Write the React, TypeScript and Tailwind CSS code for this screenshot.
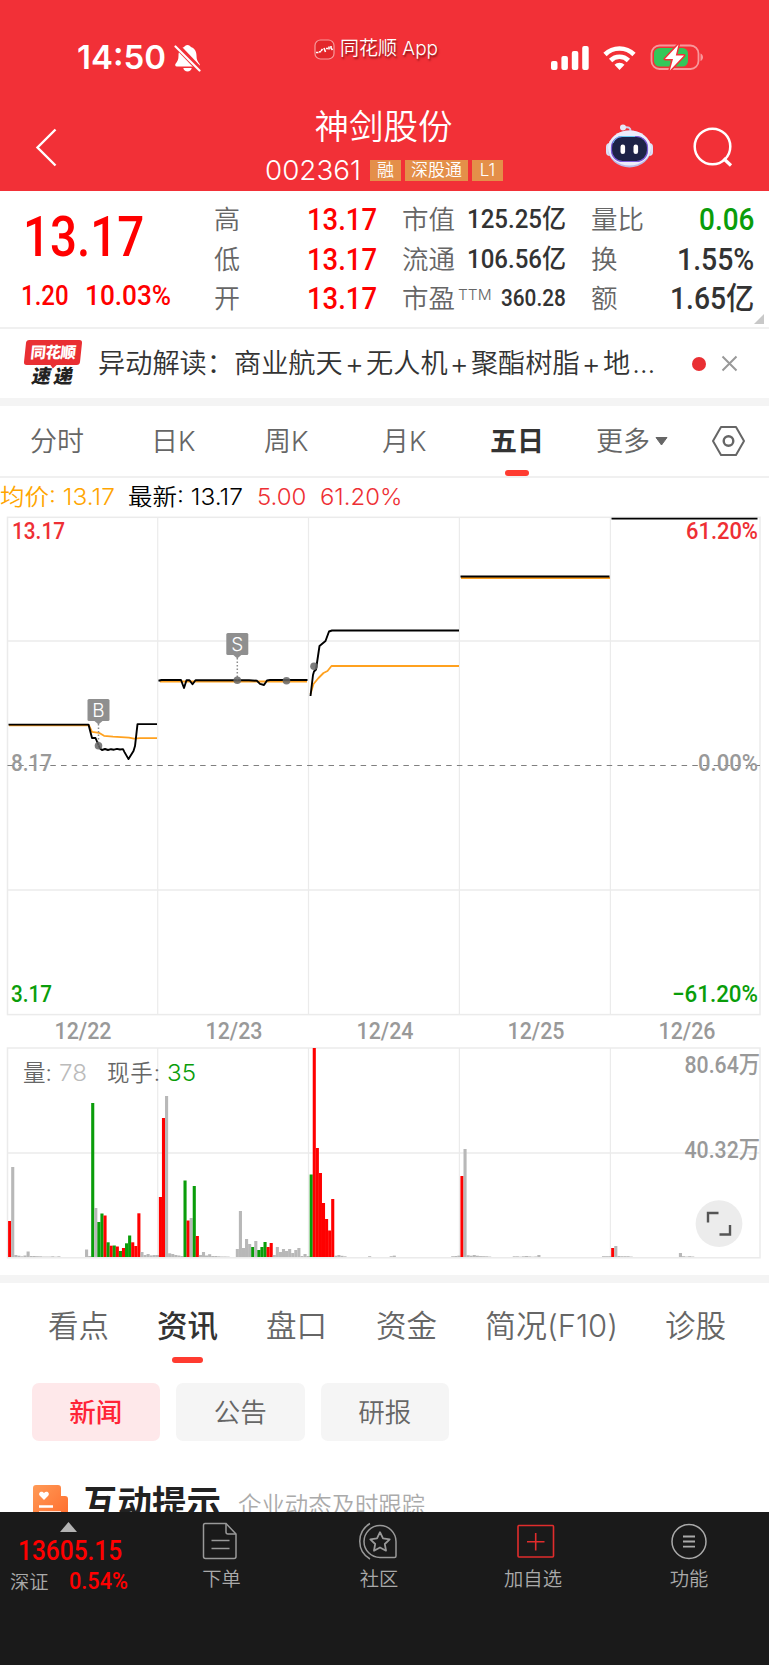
import { useLayoutEffect, useRef } from "react";
import type { ReactNode } from "react";
import clsx from "clsx";

const RED = "#ff0000";
const GREEN = "#0a9d0a";
const GRAY = "#b8b8b8";

type FitProps = { w: number; className?: string; children: ReactNode };

// Squeezes a figure horizontally to the given width
function Fit({ w, className, children }: FitProps) {
  const ref = useRef<HTMLSpanElement>(null);

  useLayoutEffect(() => {
    const el = ref.current;
    if (!el) return;
    el.style.transform = `scaleX(${w / el.offsetWidth})`;
  }, [w, children]);

  return (
    <span className={clsx("block shrink-0 whitespace-nowrap", className)} style={{ width: w }}>
      <span ref={ref} className="inline-block origin-left">
        {children}
      </span>
    </span>
  );
}

const DIN = "font-['Roboto','Noto_Sans_CJK_SC',sans-serif] font-medium";

function StatusBar() {
  return (
    <div className="flex h-[100px] items-start text-white">
      <div className="flex items-center pt-[41px] pl-[77px]">
        <Fit w={89} className="text-[33px] leading-[33px] font-semibold">14:50</Fit>
        <svg className="ml-[8px]" width="27" height="30" viewBox="0 0 27 30">
          <path d="M13.500 2c1.800 0 2.900 1 3.300 2 4 1.400 5.700 4.600 5.700 8.500 0 4 1 6 2.900 8.200.8 1 .4 2.800-1.200 2.800H2.800C1.200 23.500.8 21.700 1.600 20.700 3.500 18.500 4.500 16.500 4.500 12.500c0-3.900 1.700-7.100 5.700-8.500.4-1 1.500-2 3.300-2z" fill="#fff" />
          <path d="M9.300 25h8.400c-.4 2-2 3.500-4.200 3.500S9.700 27 9.300 25z" fill="#fff" />
          <path d="M1.500 1.500l25 26" stroke="#f23037" strokeWidth="6" />
          <path d="M1.500 3.500l24 24" stroke="#fff" strokeWidth="2.200" strokeLinecap="round" />
        </svg>
      </div>
      <div className="flex items-center pt-[38px] pl-[113px]">
        <svg width="21" height="21" viewBox="0 0 21 21">
          <rect x="1" y="1" width="19" height="19" rx="5.500" fill="#e3262b" stroke="#f79a9c" strokeWidth="1.200" />
          <path d="M2 13.500h2.500M5 13l2-.5M7 12l1.500-2M10 9l1.500 4M12 9.500h2M15 7.500v3M17 7v2l1.500 2" stroke="#fff" strokeWidth="1.600" fill="none" />
        </svg>
        <Fit w={98} className="ml-[5px] text-[19px] leading-[22px] [text-shadow:1px_2px_2px_rgba(60,0,0,0.6)]">
          同花顺 App
        </Fit>
      </div>
      <div className="ml-auto flex items-center pt-[43px] pr-[64px]">
        <svg width="38" height="26" viewBox="0 0 38 26" fill="#fff">
          <rect x="0" y="17" width="6.500" height="9" rx="2" />
          <rect x="10.400" y="12" width="6.500" height="14" rx="2" />
          <rect x="20.800" y="7" width="6.500" height="19" rx="2" />
          <rect x="31.200" y="2" width="6.500" height="24" rx="2" />
        </svg>
        <svg className="ml-[14px]" width="33" height="26" viewBox="0 0 33 26" fill="none" stroke="#fff" strokeWidth="4.600">
          <path d="M2 10.500a20.500 20.500 0 0 1 29 0" />
          <path d="M7.600 16.500a12.600 12.600 0 0 1 17.800 0" />
          <path d="M16.500 26l-5-5.200a7 7 0 0 1 10 0z" fill="#fff" stroke="none" />
        </svg>
        <svg className="ml-[14px]" width="55" height="28" viewBox="0 0 55 28">
          <rect x="1.500" y="2.500" width="47" height="23.500" rx="8" fill="none" stroke="#f9979b" strokeWidth="1.800" />
          <path d="M50.500 10.500v7.500c1.500-.5 2.500-2 2.500-3.750s-1-3.250-2.500-3.750z" fill="#f9979b" />
          <rect x="4" y="5" width="34" height="18.500" rx="5.500" fill="#34c759" />
          <path d="M28.500 1.500L15 16h8l-3.200 11.500L34 12.500h-8.200z" fill="#fff" stroke="#f23037" strokeWidth="3" paintOrder="stroke" strokeLinejoin="round" />
        </svg>
      </div>
    </div>
  );
}

function TitleBar() {
  return (
    <div className="grid h-[91px] grid-cols-[200px_1fr_200px]">
      <svg className="mt-[28px] ml-[35px]" width="24" height="40" viewBox="0 0 24 40">
        <path d="M20.500 1.500L2.500 19.500l18 18" fill="none" stroke="#fff" strokeWidth="2.400" />
      </svg>
      <div className="flex flex-col items-center">
        <h1 className="mt-[9px] mr-[2px] text-[34.500px] leading-[36px] text-white">神剑股份</h1>
        <div className="mt-[11px] mr-[1px] flex h-[28px] items-center">
          <Fit w={96} className="mr-[9px] text-[27.500px] leading-[28px] text-white">002361</Fit>
          <div className="flex gap-[4px] text-[17px] leading-[21px] text-white">
            <span className="flex h-[21px] w-[31px] justify-center bg-[#e48f49]">融</span>
            <span className="flex h-[21px] w-[63px] justify-center bg-[#e48f49]">深股通</span>
            <span className="flex h-[21px] w-[31px] justify-center bg-[#e48f49]">L1</span>
          </div>
        </div>
      </div>
      <div className="flex items-start">
        <svg className="mt-[23px] ml-[36px]" width="49" height="46" viewBox="0 0 49 46">
          <path d="M18.500 4.500c5-1 7 0 7.200 4" fill="none" stroke="#cfd2ee" strokeWidth="2" />
          <circle cx="18" cy="4.500" r="3" fill="#e6e8f8" />
          <rect x="1" y="20" width="9" height="13" rx="4" fill="#dcdff5" />
          <rect x="39" y="20" width="9" height="13" rx="4" fill="#dcdff5" />
          <ellipse cx="24.500" cy="26" rx="21.500" ry="18.500" fill="#b9bdea" />
          <ellipse cx="24.500" cy="25" rx="21.500" ry="17.500" fill="#ecedfb" />
          <rect x="6.500" y="13.500" width="36" height="25" rx="11" fill="#1d2347" stroke="#7a5bd8" strokeWidth="1.200" />
          <path d="M8 20c2-5 5-6.500 10-6.500h12" fill="none" stroke="#69c8f2" strokeWidth="1" />
          <rect x="15.500" y="21.500" width="4.600" height="9.500" rx="2.300" fill="#fff" />
          <rect x="28.500" y="21.500" width="4.600" height="9.500" rx="2.300" fill="#fff" />
        </svg>
        <svg className="mt-[26px] ml-[38px]" width="42" height="42" viewBox="0 0 42 42" fill="none" stroke="#fff" strokeWidth="2.500">
          <circle cx="20.500" cy="20.500" r="17.800" />
          <path d="M31.500 32.500l7.500 7" strokeWidth="3.200" />
        </svg>
      </div>
    </div>
  );
}

function QuotePanel() {
  return (
    <section className="relative flex h-[138px] border-b-2 border-[#f0f0f0] text-[#666]">
      <div className={clsx("w-[214px] text-[#ff0000]", DIN)}>
        <Fit w={121} className="mt-[22px] ml-[23px] text-[55px] leading-[48px]">13.17</Fit>
        <div className="mt-[21px] flex pl-[21px] text-[28px] leading-[28px]">
          <Fit w={48}>1.20</Fit>
          <Fit w={86} className="ml-[16px]">10.03%</Fit>
        </div>
      </div>
      <div className="mt-[9px] flex w-[163px] flex-col text-[26px] leading-[39.500px]">
        {["高", "低", "开"].map((label) => (
          <div key={label} className="flex h-[39.500px] items-center justify-between">
            {label}
            <Fit w={70} className={clsx("text-[31px] text-[#ff0000]", DIN)}>13.17</Fit>
          </div>
        ))}
      </div>
      <div className="mt-[9px] ml-[25px] flex w-[164px] flex-col text-[26.500px] leading-[39.500px]">
        <div className="flex h-[39.500px] items-center justify-between">
          市值<Fit w={99} className={clsx("text-[26px] text-[#333]", DIN)}>125.25亿</Fit>
        </div>
        <div className="flex h-[39.500px] items-center justify-between">
          流通<Fit w={99} className={clsx("text-[26px] text-[#333]", DIN)}>106.56亿</Fit>
        </div>
        <div className="flex h-[39.500px] items-center">
          市盈
          <Fit w={34} className="mt-[-8px] ml-[3px] text-[15px]">TTM</Fit>
          <Fit w={65} className={clsx("ml-auto text-[23px] text-[#333]", DIN)}>360.28</Fit>
        </div>
      </div>
      <div className="mt-[9px] ml-[25px] flex w-[163px] flex-col text-[26.500px] leading-[39.500px]">
        <div className="flex h-[39.500px] items-center justify-between">
          量比<Fit w={55} className={clsx("text-[31px] text-[#0a9d0a]", DIN)}>0.06</Fit>
        </div>
        <div className="flex h-[39.500px] items-center justify-between">
          换<Fit w={77} className={clsx("text-[31px] text-[#333]", DIN)}>1.55%</Fit>
        </div>
        <div className="flex h-[39.500px] items-center justify-between">
          额<Fit w={84} className={clsx("text-[31px] text-[#333]", DIN)}>1.65亿</Fit>
        </div>
      </div>
      <svg className="absolute right-[5px] bottom-[3px]" width="10" height="10" viewBox="0 0 10 10">
        <path d="M10 0v10H0z" fill="#c8c8c8" />
      </svg>
    </section>
  );
}

const headline = ["商业航天", "无人机", "聚酯树脂", "地"];

function NewsBar() {
  return (
    <section className="flex h-[69px] items-center">
      <div className="ml-[24px] flex w-[58px] flex-col items-center">
        <div className="relative flex h-[25px] w-[56px] -skew-x-6 items-center justify-center rounded-[3px] bg-[#e92f33] text-[15.500px] leading-[20px] font-black tracking-[-0.5px] text-white">
          同花顺
          <svg className="absolute top-[24px] left-[26px]" width="8" height="5" viewBox="0 0 8 5">
            <path d="M0 0h8L3.500 4.500z" fill="#e92f33" />
          </svg>
        </div>
        <div className="mt-[2px] -skew-x-12 text-[19px] leading-[20px] font-black text-[#222]">
          速<span className="ml-[3px]">递</span>
        </div>
      </div>
      <div className="ml-[16px] flex text-[27.200px] leading-[36px] whitespace-nowrap text-[#333]">
        异动解读：
        {headline.map((word, i) => (
          <span key={word} className="flex">
            {i > 0 && <span className="flex w-[23.300px] justify-center text-[29px]">+</span>}
            {word}
          </span>
        ))}
        <span className="ml-[2px]">…</span>
      </div>
      <i className="ml-auto size-[14px] rounded-full bg-[#e92f33]" />
      <svg className="mr-[31px] ml-[15px]" width="17" height="17" viewBox="0 0 17 17">
        <path d="M1.500 1.500l14 14M15.500 1.500l-14 14" stroke="#999" strokeWidth="2" />
      </svg>
    </section>
  );
}

function PeriodTabs() {
  return (
    <nav className="flex h-[72px] border-b-2 border-[#f0f0f0] text-[27px] leading-[72px] whitespace-nowrap text-[#666]">
      <span className="ml-[30px] w-[121px]">分时</span>
      <span className="w-[113px]">日K</span>
      <span className="w-[118px]">周K</span>
      <span className="w-[108px]">月K</span>
      <span className="flex w-[54px] flex-col items-center font-bold text-[#333]">
        <span className="h-[64px]">五日</span>
        <i className="h-[6px] w-[24px] rounded-full bg-[#ff3b30]" />
      </span>
      <span className="ml-[52px]">更多</span>
      <svg className="mt-[31px] ml-[5px]" width="13" height="9" viewBox="0 0 13 9">
        <path d="M1 .5h11L6.500 8z" fill="#666" stroke="#666" strokeLinejoin="round" />
      </svg>
      <svg className="mt-[19px] ml-[43px]" width="35" height="32" viewBox="0 0 35 32" fill="none" stroke="#666" strokeWidth="2">
        <path d="M10 2h15l8 14-8 14H10L2 16z" strokeLinejoin="round" />
        <circle cx="17.500" cy="16" r="4.800" strokeWidth="2.400" />
      </svg>
    </nav>
  );
}

type AxisTextProps = { x: number; y: number; w: number; fill: string; children: ReactNode };

function AxisText({ x, y, w, fill, children }: AxisTextProps) {
  return (
    <text
      x={x}
      y={y}
      textLength={w}
      lengthAdjust="spacingAndGlyphs"
      fill={fill}
      fontSize="23.500"
      fontWeight="500"
      fontFamily="Roboto, 'Noto Sans CJK SC', sans-serif"
    >
      {children}
    </text>
  );
}

const splits = [157.7, 308.5, 459.4, 610.4];

function Marker({ x, y, to, label }: { x: number; y: number; to: number; label: string }) {
  return (
    <g>
      <path d={`M${x} ${y + 25}V${to}`} stroke="#8c8c8c" strokeWidth="1.500" strokeDasharray="1.500 2" />
      <rect x={x - 11} y={y} width="22" height="22" rx="1.500" fill="#8f8f8f" />
      <path d={`M${x - 4} ${y + 22}h8l-4 3.500z`} fill="#8f8f8f" />
      <text x={x} y={y + 18} fontSize="19" textAnchor="middle" fill="#fff">{label}</text>
      <circle cx={x} cy={to} r="3.800" fill="#666" opacity="0.85" />
    </g>
  );
}

// Both charts use page coordinates in their view boxes
function PriceChart() {
  return (
    <svg className="block" width="769" height="530" viewBox="0 516 769 530">
      <g stroke="#ebebeb" strokeWidth="1.500" fill="none">
        <rect x="7.500" y="517.300" width="752.500" height="497.300" />
        <path d="M7.500 641H760M7.500 890H760" />
        {splits.map((x) => (
          <path key={x} d={`M${x} 517V1014`} strokeWidth="1.200" />
        ))}
      </g>
      <path d="M7.500 765.500H760" stroke="#808080" strokeWidth="1.200" strokeDasharray="5.500 5.200" />
      <g fill="none" stroke="#ffa11f" strokeWidth="1.800" strokeLinejoin="round">
        <path d="M9 725.300H89l3 6.500 7 1 5 3 9 .8 16 1 5 1 6-.4H157" />
        <path d="M160 681.500H307" />
        <path d="M310.500 694l3-10 5-6 5-5 4-2 4-5H459" />
        <path d="M461 578H610" />
      </g>
      <g fill="none" stroke="#000" strokeWidth="1.900" strokeLinejoin="round">
        <path d="M8.500 724.600H88.500L92 738h3.500l4.500 10.500 2 1.500 3-1 3 1 3-.8 3 .5 3-.8 3 .6 3-.4 1.500 3 4 7 5-8 1.500-5 2.500-22H157" />
        <path d="M158.500 680.700l3-.7H181l3 8 2.500-7.800h3l3 4 3-4H249l8 .6 3 3 4 1.200 3-4.500 3-.5H307.500" />
        <path d="M310.500 696l2.500-21 1-3.500 2-2L319.500 646l6-5 3.500-9.500 3-1H459" />
        <path d="M460.500 576.500H609.500" />
        <path d="M611.500 518.600H757.500" />
      </g>
      <Marker x={98.500} y={699} to={745.800} label="B" />
      <Marker x={237.300} y={633} to={680.300} label="S" />
      <circle cx="286.500" cy="680.700" r="3.800" fill="#666" opacity="0.85" />
      <circle cx="314" cy="666.300" r="3.800" fill="#666" opacity="0.85" />
      <AxisText x={12} y={539.300} w={53} fill="#ee2f34">13.17</AxisText>
      <AxisText x={686} y={539.300} w={72} fill="#ee2f34">61.20%</AxisText>
      <AxisText x={11} y={770.500} w={41} fill="#999">8.17</AxisText>
      <AxisText x={698} y={770.500} w={60} fill="#999">0.00%</AxisText>
      <AxisText x={11} y={1001.500} w={41} fill="#0a9d0a">3.17</AxisText>
      <AxisText x={672} y={1001.500} w={86} fill="#0a9d0a">−61.20%</AxisText>
      {["12/22", "12/23", "12/24", "12/25", "12/26"].map((day, i) => (
        <AxisText key={day} x={54.500 + i * 151} y={1038.500} w={57} fill="#999">{day}</AxisText>
      ))}
    </svg>
  );
}

type Run = [start: number, bars: [number, string][]];

const volume: Run[] = [
  [0, [[36, RED], [90, GRAY], [2, GRAY], [1.3, GRAY], [0.7, GRAY], [1.5, GRAY], [5.5, GRAY], [1, GRAY], [1, GRAY], [0.8, GRAY], [0.7, GRAY], [0.4, GRAY], [0.4, GRAY], [0.4, GRAY], [0.7, GRAY], [0.3, GRAY], [0.7, GRAY]]],
  [25, [[7.5, GRAY], [1, GRAY], [154, GREEN], [49, GRAY], [35, GREEN], [43.5, GREEN], [41.5, RED], [14.7, GREEN], [11.3, RED], [11.5, GREEN], [10.5, RED], [6, GREEN], [9, RED], [13.7, GREEN], [21.5, GREEN], [14.7, RED], [11, RED], [43.7, RED], [5, GRAY], [2, GRAY], [3, GRAY], [1.6, GRAY], [2, GRAY], [2, GRAY]]],
  [49, [[60, RED], [139, RED], [161, GRAY], [3.7, GRAY], [3, GRAY], [2, GRAY], [1.5, GRAY], [1, GRAY], [76.5, GREEN], [36.5, RED], [39, GRAY], [71, GREEN], [21, RED], [2, GRAY], [5, GRAY], [1.5, GRAY], [2.8, GRAY], [1, GRAY], [1, GRAY], [0.7, GRAY], [0.5, GRAY], [0.5, GRAY], [0.4, GRAY]]],
  [74, [[8, GRAY], [46, GRAY], [9, GRAY], [18, GRAY], [13, GRAY], [10, GREEN], [16, GRAY], [7, GREEN], [10, GREEN], [15, GREEN], [10, RED], [14, RED], [2, GRAY], [10, GRAY], [5, GRAY], [8, GRAY], [6, GRAY], [8, GRAY], [4, GRAY], [7, GRAY], [9, GRAY], [1, GRAY], [3, GRAY], [1, GRAY]]],
  [98, [[82.5, GREEN], [209, RED], [109, RED], [84, RED], [54, RED], [38, RED], [26.5, RED], [58, RED], [1.3, GRAY], [2, GRAY], [1.2, GRAY], [0.7, GRAY]]],
  [117, [[0.8, GRAY]]],
  [124, [[0.8, GRAY], [1.4, GRAY]]],
  [144, [[0.8, GRAY], [1, GRAY], [1.4, GRAY], [81, RED], [108, GRAY], [1.8, GRAY], [1.3, GRAY], [2, GRAY], [1.3, GRAY], [0.9, GRAY], [0.8, GRAY], [0.7, GRAY], [0.4, GRAY]]],
  [164, [[0.7, GRAY], [0.7, GRAY], [0.3, GRAY], [0.7, GRAY], [1, GRAY], [0.6, GRAY], [0.3, GRAY], [0.5, GRAY], [2, GRAY]]],
  [193, [[0.8, GRAY], [0.8, GRAY], [0.8, GRAY], [9, RED], [11, GRAY], [1, GRAY], [0.8, GRAY], [0.8, GRAY], [0.8, GRAY], [0.4, GRAY]]],
  [218, [[4, GRAY], [0.8, GRAY], [0.4, GRAY], [0.8, GRAY], [0.5, GRAY]]],
];

function VolumeChart() {
  return (
    <svg className="block" width="769" height="229" viewBox="0 1046 769 229">
      <g stroke="#ebebeb" strokeWidth="1.500" fill="none">
        <rect x="7.500" y="1048" width="752.500" height="209.800" />
        <path d="M7.500 1153H760" />
        {splits.map((x) => (
          <path key={x} d={`M${x} 1048V1257`} strokeWidth="1.200" />
        ))}
      </g>
      {volume.map(([start, bars]) =>
        bars.map(([h, fill], i) => (
          <rect key={start + i} x={8.1 + (start + i) * 3.077} y={1257 - h} width="3.100" height={h} fill={fill} />
        ))
      )}
      <g fontSize="22.500">
        <text x="23" y="1080.500" fill="#666">量:</text>
        <text x="59" y="1080.500" textLength="28" lengthAdjust="spacingAndGlyphs" fill="#bbb">78</text>
        <text x="107" y="1080.500" fill="#666" textLength="53">现手:</text>
        <text x="167" y="1080.500" textLength="29" lengthAdjust="spacingAndGlyphs" fill="#0a9d0a">35</text>
      </g>
      <AxisText x={684.500} y={1073} w={75.500} fill="#999">80.64万</AxisText>
      <AxisText x={684.500} y={1157.500} w={75.500} fill="#999">40.32万</AxisText>
      <circle cx="719" cy="1223.700" r="23.400" fill="#ececec" />
      <path d="M708 1222.500v-9.500h10.500M730 1225v9.500h-10.500" fill="none" stroke="#555" strokeWidth="2.400" />
    </svg>
  );
}

function InfoTabs() {
  return (
    <nav className="flex h-[100px] pt-[22px] text-[30.500px] leading-[42px] whitespace-nowrap text-[#666]">
      <span className="ml-[48px] w-[109px]">看点</span>
      <span className="flex w-[61px] flex-col items-center font-medium text-[#333]">
        资讯
        <i className="mt-[10px] h-[6px] w-[31px] rounded-full bg-[#ff3b30]" />
      </span>
      <span className="ml-[48px] w-[110px]">盘口</span>
      <span className="w-[109px]">资金</span>
      <Fit w={133}>简况(F10)</Fit>
      <span className="ml-[47px]">诊股</span>
    </nav>
  );
}

function Chips() {
  return (
    <div className="flex gap-[16px] pl-[31.500px] text-[26.500px] leading-[59px] text-[#666]">
      <span className="h-[58px] w-[128.500px] rounded-[7px] bg-[#fee8ea] text-center font-medium text-[#ff2436]">新闻</span>
      <span className="h-[58px] w-[128.500px] rounded-[7px] bg-[#f5f5f5] text-center">公告</span>
      <span className="h-[58px] w-[128.500px] rounded-[7px] bg-[#f5f5f5] text-center">研报</span>
    </div>
  );
}

function HintRow() {
  return (
    <div className="flex h-[71px] overflow-hidden pt-[43px] whitespace-nowrap">
      <svg className="mt-[1px] ml-[33px] shrink-0" width="35" height="36" viewBox="0 0 35 36">
        <defs>
          <linearGradient id="card" x1="0" y1="0" x2="1" y2="1">
            <stop offset="0" stopColor="#ff9a56" />
            <stop offset="1" stopColor="#ff6a2b" />
          </linearGradient>
        </defs>
        <path d="M3 0h22q3 0 3 3v8h4q3 0 3 3v22H0V3q0-3 3-3z" fill="url(#card)" />
        <path d="M11 15l-4.200-4.200C4.500 8 8.500 5 11 8c2.500-3 6.500 0 4.200 2.800z" fill="#fff" />
        <path d="M6 21.500h14M6 27.500h22" stroke="#fff" strokeWidth="2.400" />
      </svg>
      <h2 className="ml-[15px] text-[34.500px] leading-[38px] font-bold text-[#222]">互动提示</h2>
      <span className="mt-[5px] ml-[17px] text-[23.400px] leading-[34px] text-[#aaa]">企业动态及时跟踪</span>
    </div>
  );
}

function BottomBar() {
  return (
    <footer className="flex h-[153px] bg-[#1a1a1a] text-[19.300px] leading-[24px] text-[#aaa]">
      <div className="w-[148px] pt-[10px]">
        <svg className="ml-[60px]" width="17" height="10" viewBox="0 0 17 10">
          <path d="M8.500 0L17 10H0z" fill="#b3b3b3" />
        </svg>
        <Fit w={104} className={clsx("mt-[5px] ml-[18px] text-[28px] leading-[28px] text-[#ff0000]", DIN)}>
          13605.15
        </Fit>
        <div className="mt-[4px] flex pl-[10px]">
          <span className="mt-[1px]">深证</span>
          <Fit w={59} className={clsx("ml-[20px] text-[23.500px] leading-[24px] text-[#ff0000]", DIN)}>
            0.54%
          </Fit>
        </div>
      </div>
      <div className="flex w-[148px] flex-col items-center pt-[10px]">
        <svg className="mr-[4px]" width="36" height="38" viewBox="0 0 36 38" fill="none" stroke="#999" strokeWidth="1.500">
          <path d="M3 1.500h21L34 12v22.500q0 2-2 2H3.500q-2 0-2-2v-31q0-2 1.500-2z" />
          <path d="M24 1.500v8.500q0 2 2 2h8M9.500 18.500h18M9.500 26.500h18" />
        </svg>
        <span className="mt-[7px] mr-[1px]">下单</span>
      </div>
      <div className="flex w-[166px] flex-col items-center pt-[10px]">
        <svg className="mr-[4px]" width="42" height="38" viewBox="0 0 42 38" fill="none" stroke="#999" strokeWidth="1.500">
          <path d="M14 1.500A20.500 20.500 0 0 0 14 37" />
          <path d="M24 3.500A16 16 0 1 0 24 35.500H38.500q1.500 0 1.500-1.500V19.500A16 16 0 0 0 24 3.500z" />
          <path d="M24 10.200l3 6.100 6.700 1-4.900 4.700 1.200 6.700-6-3.200-6 3.200 1.200-6.700-4.900-4.700 6.700-1z" strokeWidth="1.800" strokeLinejoin="round" />
        </svg>
        <span className="mt-[7px]">社区</span>
      </div>
      <div className="flex w-[142px] flex-col items-center pt-[10px]">
        <svg className="ml-[5px]" width="38" height="38" viewBox="0 0 38 38" fill="none" stroke="#e02c2c" strokeWidth="1.600">
          <rect x="1" y="3.500" width="35.500" height="31.500" rx="1" />
          <path d="M18.700 11v17.500M10 19.700h17.500" />
        </svg>
        <span className="mt-[7px]">加自选</span>
      </div>
      <div className="flex w-[165px] flex-col items-center pt-[10px] pl-[5px]">
        <svg width="38" height="38" viewBox="0 0 38 38" fill="none" stroke="#aaa" strokeWidth="1.500">
          <circle cx="19" cy="19.500" r="17" />
          <path d="M13 14.500h12M13 19.500h12M13 24.700h12" strokeWidth="1.800" />
        </svg>
        <span className="mt-[7px]">功能</span>
      </div>
    </footer>
  );
}

export default function App() {
  return (
    <div className="flex h-[1665px] w-[769px] flex-col overflow-hidden bg-white font-['Inter','Noto_Sans_CJK_SC',sans-serif] font-[350]">
      <header className="h-[191px] shrink-0 bg-[#f23037]">
        <StatusBar />
        <TitleBar />
      </header>
      <QuotePanel />
      <NewsBar />
      <div className="h-[8px] bg-[#f4f4f4]" />
      <PeriodTabs />
      <div className="flex h-[38px] text-[23px] leading-[38px] whitespace-nowrap text-[#ee2f34]">
        <Fit w={115} className="text-[#ffa500]">均价: 13.17</Fit>
        <Fit w={115} className="ml-[13px] text-black">最新: 13.17</Fit>
        <Fit w={49} className="ml-[14px]">5.00</Fit>
        <Fit w={82} className="ml-[14px]">61.20%</Fit>
      </div>
      <PriceChart />
      <VolumeChart />
      <div className="h-[8px] bg-[#f4f4f4]" />
      <InfoTabs />
      <Chips />
      <HintRow />
      <BottomBar />
    </div>
  );
}
